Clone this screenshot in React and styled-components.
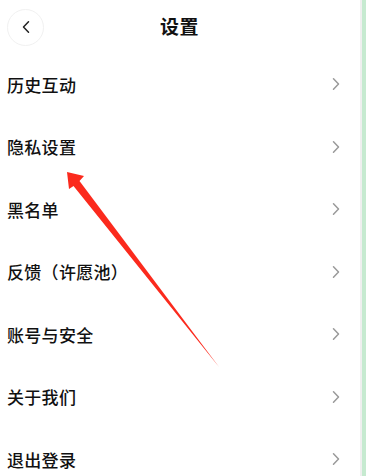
import React from 'react';
import styled, { createGlobalStyle } from 'styled-components';

const Global = createGlobalStyle`
    html, body {
        margin: 0;
        padding: 0;
        background: #ffffff;
    }
    body {
        font-family: "Noto Sans CJK SC", "Noto Sans", sans-serif;
        color: #111111;
    }
`

const Page = styled.div`
    position: relative;
    width: 366px;
    height: 476px;
    overflow: hidden;

    display: flex;
`

const Main = styled.div`
    flex: 1;
    display: flex;
    flex-direction: column;
`

const Edge = styled.div`
    width: 4px;
    border-left: 2px solid #efefef;
    background-color: #c6ead0;
`

const Header = styled.div`
    height: 53px;
    flex-shrink: 0;

    display: flex;
    align-items: center;
    padding-left: 7px;
`

const BackButton = styled.div`
    width: 37px;
    height: 37px;
    border-radius: 50%;
    border: 1px solid #f1f1f1;
    box-sizing: border-box;

    display: flex;
    align-items: center;
    justify-content: center;
    margin-top: 1px;
`

const Title = styled.h1`
    flex: 1;
    margin: -2px 0 0 -2px;
    padding-right: 43px;
    text-align: center;

    font-size: 19px;
    font-weight: 600;
    letter-spacing: 0.5px;
    line-height: 1;
`

const Row = styled.div`
    height: 62.5px;
    flex-shrink: 0;

    display: flex;
    align-items: center;
    justify-content: space-between;
    padding: 0 19px 0 7px;
`

const Label = styled.span`
    font-size: 17px;
    font-weight: 500;
    letter-spacing: 0.3px;
    line-height: 1;
`

const Arrow = styled.svg`
    position: absolute;
    left: 0;
    top: 0;
    pointer-events: none;
`

const Chevron = ({ dir = 'right', color = '#9a9a9a' }) => (
    <svg width="10" height="14" viewBox="0 0 10 14">
        <path
            d={dir === 'right' ? 'M2.5 1.8 L7.5 7 L2.5 12.2' : 'M7.5 1.8 L2.5 7 L7.5 12.2'}
            fill="none"
            stroke={color}
            strokeWidth="1.5"
            strokeLinecap="round"
            strokeLinejoin="round"
        />
    </svg>
)

const items = ['历史互动', '隐私设置', '黑名单', '反馈（许愿池）', '账号与安全', '关于我们', '退出登录']

export default function App() {
    return (
        <Page>
            <Global />
            <Main>
                <Header>
                    <BackButton>
                        <Chevron dir="left" color="#222" />
                    </BackButton>
                    <Title>设置</Title>
                </Header>
                {items.map(item => (
                    <Row key={item}>
                        <Label>{item}</Label>
                        <Chevron />
                    </Row>
                ))}
            </Main>
            <Edge />
            <Arrow width="366" height="476" viewBox="0 0 366 476">
                <polygon
                    points="67,172 84,176 79.5,181 219,367 73.5,186 69,189"
                    fill="#fb2a1d"
                />
            </Arrow>
        </Page>
    )
}
